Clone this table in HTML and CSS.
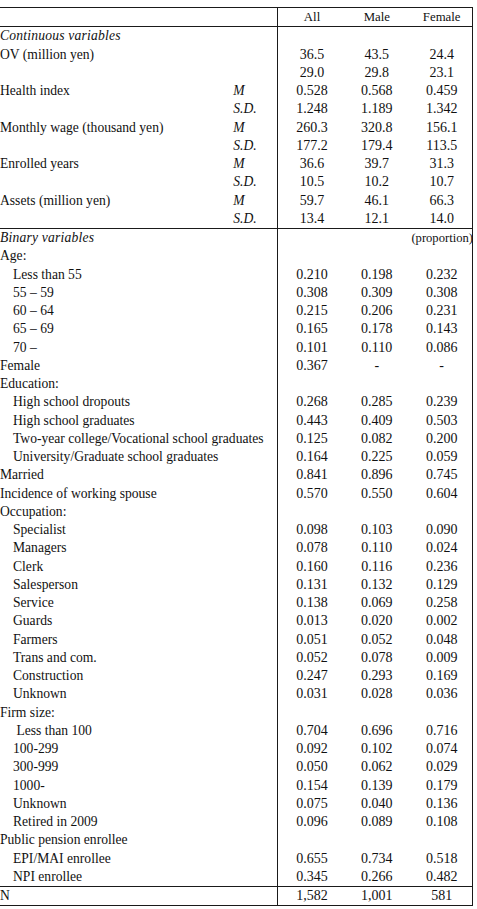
FILE: index.html
```html
<!DOCTYPE html>
<html>
<head>
<meta charset="utf-8">
<link rel="stylesheet" href="styles.css">
</head>
<body>
<table class="stats">
  <colgroup>
    <col class="c-label"><col class="c-stat"><col class="c-num"><col class="c-num"><col class="c-num">
  </colgroup>
  <thead>
    <tr class="head"><th></th><th></th><th class="num first">All</th><th class="num">Male</th><th class="num">Female</th></tr>
  </thead>
  <tbody class="sec">
    <tr><td class="sect">Continuous variables</td><td></td><td class="num first"></td><td class="num"></td><td class="num"></td></tr>
    <tr><td>OV (million yen)</td><td></td><td class="num first">36.5</td><td class="num">43.5</td><td class="num">24.4</td></tr>
    <tr><td></td><td></td><td class="num first">29.0</td><td class="num">29.8</td><td class="num">23.1</td></tr>
    <tr><td>Health index</td><td class="st">M</td><td class="num first">0.528</td><td class="num">0.568</td><td class="num">0.459</td></tr>
    <tr><td></td><td class="st">S.D.</td><td class="num first">1.248</td><td class="num">1.189</td><td class="num">1.342</td></tr>
    <tr><td>Monthly wage (thousand yen)</td><td class="st">M</td><td class="num first">260.3</td><td class="num">320.8</td><td class="num">156.1</td></tr>
    <tr><td></td><td class="st">S.D.</td><td class="num first">177.2</td><td class="num">179.4</td><td class="num">113.5</td></tr>
    <tr><td>Enrolled years</td><td class="st">M</td><td class="num first">36.6</td><td class="num">39.7</td><td class="num">31.3</td></tr>
    <tr><td></td><td class="st">S.D.</td><td class="num first">10.5</td><td class="num">10.2</td><td class="num">10.7</td></tr>
    <tr><td>Assets (million yen)</td><td class="st">M</td><td class="num first">59.7</td><td class="num">46.1</td><td class="num">66.3</td></tr>
    <tr><td></td><td class="st">S.D.</td><td class="num first">13.4</td><td class="num">12.1</td><td class="num">14.0</td></tr>
  </tbody>
  <tbody class="sec">
    <tr><td class="sect">Binary variables</td><td></td><td class="num first"></td><td class="num"></td><td class="num prop">(proportion)</td></tr>
    <tr><td>Age:</td><td></td><td class="num first"></td><td class="num"></td><td class="num"></td></tr>
    <tr><td class="ind">Less than 55</td><td></td><td class="num first">0.210</td><td class="num">0.198</td><td class="num">0.232</td></tr>
    <tr><td class="ind">55 – 59</td><td></td><td class="num first">0.308</td><td class="num">0.309</td><td class="num">0.308</td></tr>
    <tr><td class="ind">60 – 64</td><td></td><td class="num first">0.215</td><td class="num">0.206</td><td class="num">0.231</td></tr>
    <tr><td class="ind">65 – 69</td><td></td><td class="num first">0.165</td><td class="num">0.178</td><td class="num">0.143</td></tr>
    <tr><td class="ind">70 –</td><td></td><td class="num first">0.101</td><td class="num">0.110</td><td class="num">0.086</td></tr>
    <tr><td>Female</td><td></td><td class="num first">0.367</td><td class="num">-</td><td class="num">-</td></tr>
    <tr><td>Education:</td><td></td><td class="num first"></td><td class="num"></td><td class="num"></td></tr>
    <tr><td class="ind">High school dropouts</td><td></td><td class="num first">0.268</td><td class="num">0.285</td><td class="num">0.239</td></tr>
    <tr><td class="ind">High school graduates</td><td></td><td class="num first">0.443</td><td class="num">0.409</td><td class="num">0.503</td></tr>
    <tr><td class="ind" colspan="2">Two-year college/Vocational school graduates</td><td class="num first">0.125</td><td class="num">0.082</td><td class="num">0.200</td></tr>
    <tr><td class="ind">University/Graduate school graduates</td><td></td><td class="num first">0.164</td><td class="num">0.225</td><td class="num">0.059</td></tr>
    <tr><td>Married</td><td></td><td class="num first">0.841</td><td class="num">0.896</td><td class="num">0.745</td></tr>
    <tr><td>Incidence of working spouse</td><td></td><td class="num first">0.570</td><td class="num">0.550</td><td class="num">0.604</td></tr>
    <tr><td>Occupation:</td><td></td><td class="num first"></td><td class="num"></td><td class="num"></td></tr>
    <tr><td class="ind">Specialist</td><td></td><td class="num first">0.098</td><td class="num">0.103</td><td class="num">0.090</td></tr>
    <tr><td class="ind">Managers</td><td></td><td class="num first">0.078</td><td class="num">0.110</td><td class="num">0.024</td></tr>
    <tr><td class="ind">Clerk</td><td></td><td class="num first">0.160</td><td class="num">0.116</td><td class="num">0.236</td></tr>
    <tr><td class="ind">Salesperson</td><td></td><td class="num first">0.131</td><td class="num">0.132</td><td class="num">0.129</td></tr>
    <tr><td class="ind">Service</td><td></td><td class="num first">0.138</td><td class="num">0.069</td><td class="num">0.258</td></tr>
    <tr><td class="ind">Guards</td><td></td><td class="num first">0.013</td><td class="num">0.020</td><td class="num">0.002</td></tr>
    <tr><td class="ind">Farmers</td><td></td><td class="num first">0.051</td><td class="num">0.052</td><td class="num">0.048</td></tr>
    <tr><td class="ind">Trans and com.</td><td></td><td class="num first">0.052</td><td class="num">0.078</td><td class="num">0.009</td></tr>
    <tr><td class="ind">Construction</td><td></td><td class="num first">0.247</td><td class="num">0.293</td><td class="num">0.169</td></tr>
    <tr><td class="ind">Unknown</td><td></td><td class="num first">0.031</td><td class="num">0.028</td><td class="num">0.036</td></tr>
    <tr><td>Firm size:</td><td></td><td class="num first"></td><td class="num"></td><td class="num"></td></tr>
    <tr><td class="ind">&nbsp;Less than 100</td><td></td><td class="num first">0.704</td><td class="num">0.696</td><td class="num">0.716</td></tr>
    <tr><td class="ind">100-299</td><td></td><td class="num first">0.092</td><td class="num">0.102</td><td class="num">0.074</td></tr>
    <tr><td class="ind">300-999</td><td></td><td class="num first">0.050</td><td class="num">0.062</td><td class="num">0.029</td></tr>
    <tr><td class="ind">1000-</td><td></td><td class="num first">0.154</td><td class="num">0.139</td><td class="num">0.179</td></tr>
    <tr><td class="ind">Unknown</td><td></td><td class="num first">0.075</td><td class="num">0.040</td><td class="num">0.136</td></tr>
    <tr><td class="ind">Retired in 2009</td><td></td><td class="num first">0.096</td><td class="num">0.089</td><td class="num">0.108</td></tr>
    <tr><td>Public pension enrollee</td><td></td><td class="num first"></td><td class="num"></td><td class="num"></td></tr>
    <tr><td class="ind">EPI/MAI enrollee</td><td></td><td class="num first">0.655</td><td class="num">0.734</td><td class="num">0.518</td></tr>
    <tr><td class="ind">NPI enrollee</td><td></td><td class="num first">0.345</td><td class="num">0.266</td><td class="num">0.482</td></tr>
  </tbody>
  <tfoot>
    <tr class="total"><td>N</td><td></td><td class="num first">1,582</td><td class="num">1,001</td><td class="num">581</td></tr>
  </tfoot>
</table>
</body>
</html>
```
FILE: styles.css
```css
html, body {
  margin: 0;
  padding: 0;
  background: #ffffff;
}
body {
  padding-top: 7px;
  font-family: "Liberation Serif", "Times New Roman", serif;
  font-size: 13.6px;
  color: #111111;
}
.stats {
  border-collapse: collapse;
  table-layout: fixed;
  width: 473px;
}
.c-label { width: 233px; }
.c-stat { width: 44px; }
.c-num { width: 65px; }
.stats th,
.stats td {
  padding: 0;
  height: 18.25px;
  line-height: 18px;
  white-space: nowrap;
  text-align: left;
  font-weight: normal;
  vertical-align: middle;
  overflow: visible;
}
.stats .num {
  text-align: center;
  padding-left: 4px;
  font-size: 14px;
  border-right: 1px solid #1a1a1a;
}
.stats .num.first {
  border-left: 1px solid #1a1a1a;
}
.stats .num:not(:last-child) {
  border-right: none;
}
.stats .num.prop {
  text-align: right;
  padding-right: 1px;
  font-size: 12.6px;
}
.stats .head th {
  border-top: 1px solid #1a1a1a;
  border-bottom: 1px solid #1a1a1a;
  font-size: 12.8px;
}
.sec + .sec tr:first-child td {
  border-top: 1px solid #1a1a1a;
}
.sect {
  font-style: italic;
  letter-spacing: 0.2px;
}
.st {
  font-style: italic;
}
.ind {
  padding-left: 13px !important;
}
.total td {
  border-top: 1.5px solid #1a1a1a;
  border-bottom: 1.5px solid #1a1a1a;
  height: 18px;
}
```
